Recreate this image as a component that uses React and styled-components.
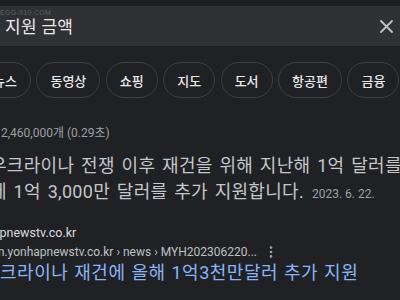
import React from 'react';
import styled, { createGlobalStyle } from 'styled-components';

const GlobalStyle = createGlobalStyle`
  html, body {
    margin: 0;
    padding: 0;
    background: #202124;
  }
  body {
    font-family: Roboto, "Noto Sans CJK KR", sans-serif;
  }
`;

const chips = ['뉴스', '동영상', '쇼핑', '지도', '도서', '항공편', '금융'];

const App = () => {
    return (
        <Page>
            <GlobalStyle />
            <TopBand />
            <SearchBar>
                <Watermark>EGG-910.COM</Watermark>
                <Query>지원 금액</Query>
                <ClearButton aria-label="지우기">
                    <svg width="13" height="13" viewBox="0 0 13 13">
                        <path d="M1 1L12 12M12 1L1 12" stroke="#bdc1c6" strokeWidth="1.8" strokeLinecap="round" />
                    </svg>
                </ClearButton>
            </SearchBar>

            <ChipRow>
                {chips.map(c => (
                    <Chip key={c}>{c}</Chip>
                ))}
            </ChipRow>

            <Results>
                <Count shift={-13}>약 2,460,000개 (0.29초)</Count>

                <Snippet>
                    <Line shift={-10}>우크라이나 전쟁 이후 재건을 위해 지난해 1억 달러를 지원한 데 이어</Line>
                    <Line shift={-10}>
                        에 1억 3,000만 달러를 추가 지원합니다.<DateText>2023. 6. 22.</DateText>
                    </Line>
                </Snippet>

                <SiteName shift={-34}>yonhapnewstv.co.kr</SiteName>
                <UrlRow>
                    <Url shift={-45}>https://m.yonhapnewstv.co.kr › news › MYH202306220...</Url>
                    <Dots width="4" height="12" viewBox="0 0 4 12">
                        <circle cx="2" cy="1.6" r="1.3" fill="#9aa0a6" />
                        <circle cx="2" cy="6" r="1.3" fill="#9aa0a6" />
                        <circle cx="2" cy="10.4" r="1.3" fill="#9aa0a6" />
                    </Dots>
                </UrlRow>
                <Title shift={-17}>우크라이나 재건에 올해 1억3천만달러 추가 지원</Title>
            </Results>
        </Page>
    )
}

export default App

// Styled Components

const Page = styled.div`
    width: 400px;
    height: 300px;
    overflow: hidden;
    background: #202124;
    color: #e8eaed;
`;

const TopBand = styled.div`
    height: 6px;
    background: #1d1e21;
`;

const SearchBar = styled.div`
    position: relative;
    height: 40px;
    background: #303134;
    display: flex;
    align-items: center;
    padding: 0 7px 0 5px;
    box-sizing: border-box;
`;

const Watermark = styled.span`
    position: absolute;
    top: 3px;
    left: 0;
    font-family: "Liberation Sans", sans-serif;
    font-size: 7px;
    line-height: 8px;
    color: rgba(255, 255, 255, 0.22);
    letter-spacing: 0.3px;
`;

const Query = styled.div`
    flex: 1;
    font-size: 17px;
    line-height: 22px;
    color: #e8eaed;
    padding-top: 2px;
    letter-spacing: 0.3px;
`;

const ClearButton = styled.div`
    width: 13px;
    height: 13px;
    display: flex;
    margin-top: 1px;
`;

const ChipRow = styled.div`
    display: flex;
    gap: 5.5px;
    margin: 16px 0 0 -21px;
    white-space: nowrap;
`;

const Chip = styled.div`
    flex: none;
    height: 36px;
    box-sizing: border-box;
    padding: 0 13px;
    border: 1px solid #3c4043;
    border-radius: 18px;
    display: flex;
    align-items: center;
    font-size: 13px;
    font-weight: 500;
    color: #e8eaed;
`;

const Results = styled.div`
    white-space: nowrap;
`;

const Count = styled.div`
    margin: 27px 0 0 ${p => p.shift}px;
    font-size: 12px;
    line-height: 16px;
    color: #9aa0a6;
`;

const Snippet = styled.div`
    margin-top: 12px;
`;

const Line = styled.div`
    margin-left: ${p => p.shift}px;
    font-size: 18px;
    line-height: 26px;
    letter-spacing: 0.3px;
    word-spacing: 2px;
    color: #c4c7cb;
`;

const DateText = styled.span`
    margin-left: 8px;
    font-size: 12px;
    letter-spacing: 0;
    word-spacing: 0;
    color: #9aa0a6;
`;

const SiteName = styled.div`
    margin: 16px 0 0 ${p => p.shift}px;
    font-size: 12.5px;
    line-height: 20px;
    color: #dadce0;
`;

const UrlRow = styled.div`
    display: flex;
    align-items: center;
    height: 16px;
    margin-top: 1px;
`;

const Url = styled.span`
    margin-left: ${p => p.shift}px;
    font-size: 12px;
    line-height: 16px;
    color: #bdc1c6;
`;

const Dots = styled.svg`
    margin-left: 12px;
    flex: none;
`;

const Title = styled.div`
    margin: 1px 0 0 ${p => p.shift}px;
    font-size: 18px;
    line-height: 24px;
    letter-spacing: 0.5px;
    word-spacing: 1px;
    color: #8ab4f8;
`;
